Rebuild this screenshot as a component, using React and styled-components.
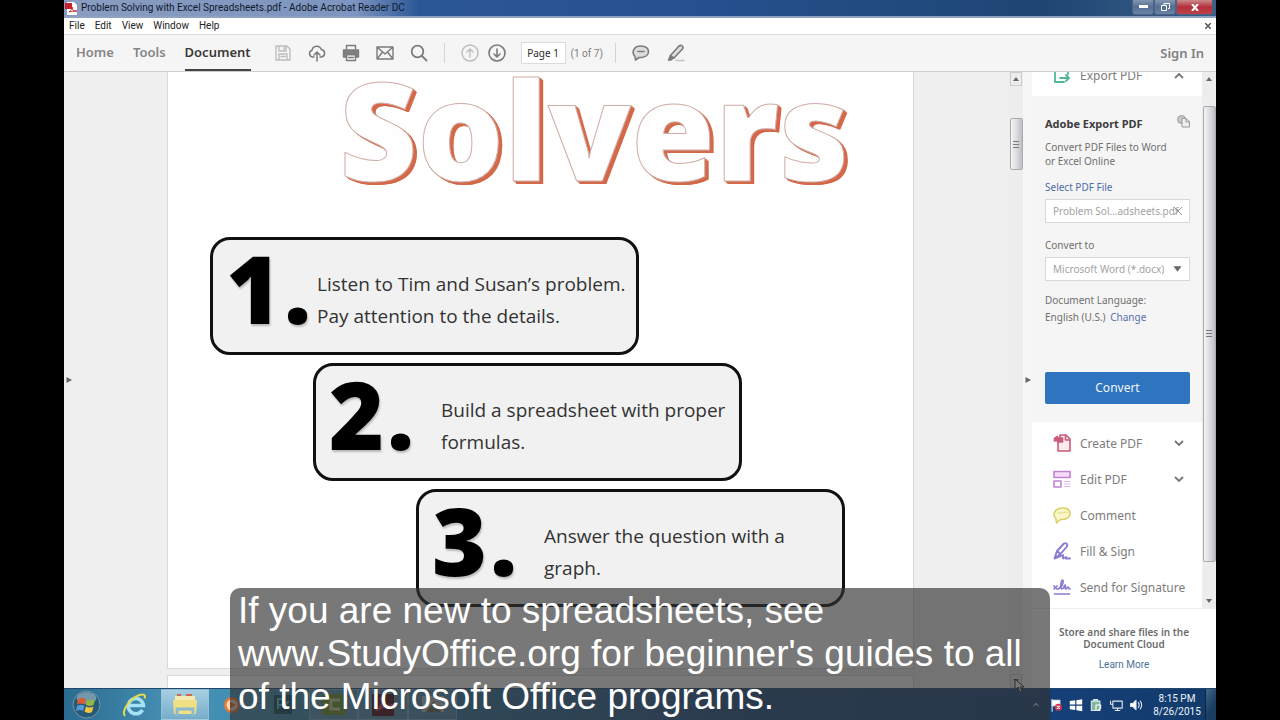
import React from "react";
import styled, { createGlobalStyle, css } from "styled-components";

const GlobalStyle = createGlobalStyle`
  *, *::before, *::after { box-sizing: border-box; }
  body { margin: 0; background: #000; font-family: "Noto Sans", "Open Sans", sans-serif; }
  button, input, select { font: inherit; color: inherit; margin: 0; padding: 0; border: 0; background: none; }
  h1, h2, p, ul, ol { margin: 0; padding: 0; font: inherit; list-style: none; }
  a { color: inherit; text-decoration: none; }
  svg { display: block; flex: none; }
`;

const Screen = styled.div`
  position: relative;
  height: 100vh;
  padding: 0 5%;
  overflow: hidden;
`;
const Desktop = styled.div`
  height: 100%;
  display: flex;
  flex-direction: column;
  background: #f0f0f1;
`;

/* Window frame */
const TitleBar = styled.header`
  flex: none;
  height: 18px;
  display: flex;
  align-items: center;
  padding-left: 1px;
  border-bottom: 2px solid #8fa3c0;
  background: linear-gradient(90deg, #8a9cc0 0, #7d95c0 290px, #2c5797 355px, #26508f 55%, #1e4673 85%, #3a5f88 100%);
`;
const WindowTitle = styled.h1`
  flex: 1;
  margin-left: 4px;
  font-family: Roboto, sans-serif;
  font-size: 10px;
  line-height: 18px;
  color: #10182c;
  white-space: nowrap;
`;
const WindowButtons = styled.div`
  display: flex;
  align-self: flex-start;
  padding-right: 3px;
`;
const WindowButton = styled.button`
  width: ${(p) => (p.$close ? 37 : 22)}px;
  height: 15px;
  display: flex;
  align-items: center;
  justify-content: center;
  border: 1px solid #4b6283;
  border-top: 0;
  border-radius: 0 0 3px 3px;
  background: ${(p) =>
    p.$close
      ? "linear-gradient(#c98a8c, #b5303c 50%, #c04048)"
      : "linear-gradient(#8296b0, #536f94 50%, #6984a6)"};
`;

const MenuBar = styled.nav`
  flex: none;
  height: 16px;
  display: flex;
  align-items: center;
  gap: 10px;
  padding: 0 5px;
  background: #fff;
  font-family: Roboto, sans-serif;
  font-size: 10px;
  color: #222;
`;
const MenuItem = styled.button`
  line-height: 14px;
  &:last-child { margin-left: auto; }
`;

const Toolbar = styled.div`
  flex: none;
  height: 38px;
  display: flex;
  align-items: center;
  padding: 0 12px;
  border-top: 1px solid #dedee1;
  border-bottom: 1px solid #cfcfd1;
  background: #f6f5f6;
  color: #7b7b7b;
`;
const Tabs = styled.div`
  display: flex;
  align-self: stretch;
  gap: 19px;
  margin-right: 23px;
`;
const Tab = styled.button`
  font-size: 13px;
  font-weight: 600;
  color: ${(p) => (p.$active ? "#3a3a3a" : "#858585")};
  border-bottom: 2px solid ${(p) => (p.$active ? "#444" : "transparent")};
`;
const ToolGroup = styled.div`
  display: flex;
  align-items: center;
  gap: ${(p) => p.$gap}px;
`;
const ToolButton = styled.button`
  width: 18px;
  height: 18px;
  opacity: ${(p) => (p.disabled ? 0.45 : 1)};
`;
const Divider = styled.span`
  width: 1px;
  height: 20px;
  margin: 0 16px 0 ${(p) => (p.$tight ? 12 : 16)}px;
  background: #d4d4d6;
`;
const PageInput = styled.input`
  width: 45px;
  height: 22px;
  margin: 0 5px 0 15px;
  border: 1px solid #dcdcde;
  background: #fff;
  font-size: 10px;
  text-align: center;
  color: #2b2b2b;
`;
const PageCount = styled.span`
  font-family: Roboto, sans-serif;
  font-size: 10px;
  white-space: nowrap;
`;
const SignIn = styled.a`
  margin-left: auto;
  font-size: 13px;
  font-weight: 600;
  color: #808080;
`;

/* Document */
const Workspace = styled.main`
  flex: 1;
  min-height: 0;
  display: flex;
  overflow: hidden;
`;
const DocumentView = styled.div`
  flex: 1;
  min-width: 0;
  display: flex;
  align-items: flex-start;
  background: #efeff0;
`;
const SideHandle = styled.button`
  flex: none;
  align-self: stretch;
  width: 9px;
  display: flex;
  align-items: center;
  justify-content: center;
  background: ${(p) => (p.$light ? "#f6f6f6" : "none")};
`;
const Pages = styled.div`
  flex: 1;
  min-width: 0;
  margin: 0 95px 0 94px;
  display: flex;
  flex-direction: column;
  gap: 6px;
`;
const Page = styled.article`
  min-height: ${(p) => (p.$first ? 597 : 40)}px;
  padding-left: 42px;
  overflow: hidden;
  border: 1px solid #d9d9da;
  border-top-width: ${(p) => (p.$first ? 0 : 1)}px;
  background: #fff;
`;
const DocTitle = styled.h2`
  margin: -25px 0 26px 129px;
  font-family: "Open Sans", sans-serif;
  font-weight: 800;
  font-size: 136px;
  line-height: 164px;
  color: #fffefe;
  white-space: nowrap;
  -webkit-text-stroke: 1px #cfaea7;
  text-shadow: 1px 1px 0 #d4694a, 2px 1px 0 #d4694a, 2px 2px 0 #d4694a, 3px 2px 0 #d4694a, 3px 3px 0 #d4694a, 4px 3px 0 #d4694a;
`;
const Steps = styled.ol`
  display: flex;
  flex-direction: column;
  gap: 8px;
`;
const Step = styled.li`
  width: 429px;
  height: 118px;
  margin-left: ${(p) => p.$level * 103}px;
  display: flex;
  border: 3px solid #111;
  border-radius: 20px;
  background: #f1f1f1;
  white-space: nowrap;
`;
const StepNumber = styled.span`
  width: ${(p) => (p.$wide ? 125 : 104)}px;
  padding-left: 13px;
  display: flex;
  gap: 3px;
  font-family: "Open Sans", sans-serif;
  font-weight: 800;
  font-size: 94px;
  line-height: 96px;
  color: #000;
  text-shadow: 1px 2px 2px #8888;
`;
const StepText = styled.p`
  padding-top: 28px;
  font-family: "Open Sans", sans-serif;
  font-size: 19px;
  line-height: 32px;
  color: #333;
`;

const Scrollbar = styled.div`
  flex: none;
  width: 14px;
  display: flex;
  flex-direction: column;
  align-items: center;
  justify-content: space-between;
  background: #ededee;
`;
const ScrollArrow = styled.button`
  width: 12px;
  height: 14px;
  display: flex;
  align-items: center;
  justify-content: center;
  border: ${(p) => (p.$boxed ? "1px solid #ccc" : "0")};
`;
const ScrollThumb = styled.div`
  width: 13px;
  height: ${(p) => p.$height};
  margin-bottom: auto;
  margin-top: ${(p) => p.$offset}px;
  display: flex;
  align-items: center;
  justify-content: center;
  border: 1px solid #aaaab0;
  border-radius: 2px;
  background: linear-gradient(90deg, #f4f4f5, #dcdce0 50%, #bdbdc5);
`;

/* Tool panel */
const ToolsPanel = styled.aside`
  flex: none;
  width: 184px;
  display: flex;
  flex-direction: column;
  background: #fff;
`;
const PanelScroll = styled.div`
  flex: 1;
  min-height: 0;
  display: flex;
  border-bottom: 1px solid #eee;
`;
const PanelBody = styled.div`
  flex: 1;
  min-width: 0;
  overflow: hidden;
`;
const ToolRow = styled.button`
  width: 100%;
  height: 36px;
  margin-top: ${(p) => (p.$scrolled ? -15 : 0)}px;
  display: flex;
  align-items: center;
  padding: 0 18px 0 21px;
  font-size: 12px;
  color: #7c7c7c;
  white-space: nowrap;
  > span { margin-left: 9px; }
  > svg:last-child:not(:first-child) { margin-left: auto; }
`;
const ToolList = styled.div`
  padding-top: 3px;
`;
const ExportForm = styled.form`
  margin-top: 3px;
  padding: 19px 12px 18px 13px;
  display: flex;
  flex-direction: column;
  background: #f5f5f5;
  font-size: 10px;
  line-height: 16px;
  color: #707070;
`;
const FormTitle = styled.h2`
  display: flex;
  justify-content: space-between;
  font-size: 11px;
  font-weight: 700;
  line-height: 18px;
  color: #3c3c3c;
  white-space: nowrap;
`;
const FormText = styled.p`
  margin: 7px 0 11px;
  line-height: 14px;
  white-space: nowrap;
`;
const FieldLabel = styled.label`
  margin-bottom: 4px;
  color: ${(p) => (p.$link ? "#4d6da8" : "#707070")};
`;
const Field = styled.div`
  height: 24px;
  margin-bottom: ${(p) => p.$after}px;
  display: flex;
  align-items: center;
  padding: 0 7px;
  border: 1px solid #d8d8d8;
  background: #fff;
  color: #a2a2a2;
`;
const control = css`
  flex: 1;
  min-width: 0;
  height: 22px;
  appearance: none;
  outline: 0;
`;
const FileInput = styled.input`${control}`;
const FormatSelect = styled.select`${control}`;
const ClearMark = styled.svg`
  margin-left: -8px;
`;
const Language = styled.p`
  margin-bottom: 46px;
  line-height: 17px;
  white-space: nowrap;
  a { margin-left: 2px; color: #5a70ae; }
`;
const ConvertButton = styled.button`
  height: 32px;
  border-radius: 2px;
  background: #2e74be;
  font-size: 12px;
  color: #f1f6fc;
`;
const CloudNote = styled.footer`
  flex: none;
  height: 79px;
  padding-top: 17px;
  text-align: center;
  font-size: 10px;
  line-height: 12px;
  font-weight: 600;
  color: #6c6c6c;
  a { display: block; margin-top: 9px; font-family: Roboto, sans-serif; font-weight: 400; color: #4d7199; }
`;

/* Taskbar */
const Taskbar = styled.footer`
  flex: none;
  height: 32px;
  display: flex;
  align-items: stretch;
  border-top: 1px solid #23466b;
  background: linear-gradient(90deg, #2a6b8f 0, #4790b5 110px, #3f8eb3 200px, #2c6f9c 36%, #1d4a80 60%, #16407a 84%, #123a6b 100%);
`;
const TaskButton = styled.button`
  width: ${(p) => p.$width}px;
  display: flex;
  align-items: center;
  justify-content: center;
  border: 1px solid ${(p) => (p.$open ? "#9cc4dc88" : "transparent")};
  background: ${(p) => (p.$active ? "linear-gradient(#a7cfe2, #77adca)" : p.$open ? "#ffffff22" : "none")};
`;
const Tray = styled.div`
  margin-left: auto;
  display: flex;
  align-items: center;
  gap: 6px;
`;
const TrayButton = styled.button`
  width: 14px;
  height: 14px;
`;
const Clock = styled.time`
  width: 56px;
  text-align: center;
  font-family: Roboto, sans-serif;
  font-size: 10px;
  line-height: 13px;
  color: #eef4fa;
`;
const ShowDesktop = styled.button`
  width: 11px;
  border-left: 1px solid #0c2744;
  background: linear-gradient(120deg, #426889, #1a3d62 60%);
`;

/* Overlays */
const Caption = styled.p`
  position: absolute;
  bottom: 0;
  left: 0;
  right: 0;
  width: 820px;
  max-width: 100%;
  margin: 0 auto;
  padding: 1px 8px 2px;
  border-radius: 10px 10px 0 0;
  background: rgba(50, 50, 50, 0.66);
  font-family: "Liberation Sans", Arial, sans-serif;
  font-size: 37px;
  line-height: 43px;
  color: #fff;
  white-space: pre-line;
`;
const Pointer = styled.svg`
  position: absolute;
  left: 1014px;
  top: 678px;
`;

function Icon({ size = 18, sw = 1.4, color = "currentColor", children }) {
  return (
    <svg width={size} height={size} viewBox="0 0 18 18" fill="none" stroke={color} strokeWidth={sw} strokeLinejoin="round" strokeLinecap="round" aria-hidden="true">
      {children}
    </svg>
  );
}
const Triangle = ({ d, w = 6, h = 6 }) => (
  <svg width={w} height={h} viewBox="0 0 6 6" fill="#666" aria-hidden="true"><path d={d} /></svg>
);
const RIGHT = "M0.5 0L6 3L0.5 6Z";
const UP = "M0 5L3 1L6 5Z";
const DOWN = "M0 1L3 5L6 1Z";
const Grip = () => (
  <svg width="6" height="7" viewBox="0 0 6 7" stroke="#77777d" aria-hidden="true"><path d="M0 .5h6M0 3.500h6M0 6.500h6" /></svg>
);
const Chevron = ({ up }) => (
  <svg width="10" height="7" viewBox="0 0 10 7" fill="none" stroke="#777" strokeWidth="1.8" aria-hidden="true">
    <path d={up ? "M1 6L5 2L9 6" : "M1 1L5 5L9 1"} />
  </svg>
);

const fileTools = [
  ["Save", true, <Icon><path d="M2 2h11l3 3v11H2zM5 2v5h7V2M10 3.500v2M5 16v-6h8v6M7 12.500h4" /></Icon>],
  ["Upload", false, <Icon sw={1.5}><path d="M6 13H4.500A3.500 3.500 0 0 1 4 6.200 4.800 4.800 0 0 1 13.300 5.500 3.800 3.800 0 0 1 13.500 13H12M9 17V8M6 11l3-3 3 3" /></Icon>],
  ["Print", false, <Icon><path d="M4.500 5V1.500h9V5" /><path d="M1.500 6h15v7h-3v-2.500h-9V13h-3z" fill="#808080" /><path d="M4.500 10.500h9v6h-9zM6.500 13.500h5" /></Icon>],
  ["Email", false, <Icon><path d="M1 3h16v12H1zM1 3l8 7 8-7M1 15l5.500-7M17 15l-5.500-7" /></Icon>],
  ["Search", false, <Icon sw={1.8}><circle cx="7.500" cy="7.500" r="5.800" /><path d="M12 12l4.500 4.500" /></Icon>],
];

const steps = [
  ["1", "Listen to Tim and Susan’s problem.", "Pay attention to the details."],
  ["2", "Build a spreadsheet with proper", "formulas."],
  ["3", "Answer the question with a", "graph."],
];

const tools = [
  ["Create PDF", true, <Icon sw={1.6} color="#c95c7a"><path d="M5 8v9h12V5l-4-4H7v3" fill="#fbe9ee" /><path d="M12.500 1v5H17" /><path d="M1.500 7V4.500l3-2v1.500h5V8h-5V6z" fill="#c95c7a" /></Icon>],
  ["Edit PDF", true, <Icon sw={1.6} color="#c483d2"><path d="M1 1.500h16v6H1z" fill="#f5ddf8" /><path d="M1 11h7v6H1z" /><path d="M11.500 11.500H17M11.500 14H17M11.500 16.500H17" strokeWidth="1" opacity=".6" /></Icon>],
  ["Comment", false, <Icon sw={1.5} color="#dccf62"><path d="M3 13C-.5 9 1 4 6 2.500 12 .8 17.500 3 17 8c-.3 4-5 6-9.500 5.500L3.500 17z" fill="#fbf6c8" /><path d="M5 6.500c2 1.500 6-1 9 0" opacity=".5" /></Icon>],
  ["Fill & Sign", false, <Icon sw={1.9} color="#8d79d2"><path d="M1.500 16.500L4 9l7-7.500c2-1 4 .5 3 3L7.500 12l-6 4.500zM4 9l3.500 3M2 16.500l8-3.500v3.500l3-1.500v1.500h4" /></Icon>],
  ["Send for Signature", false, <Icon sw={1.7} color="#8d79d2"><path d="M1.500 16h15M1 8l3 3M4 8l-3 3M5 11c5-2 6-9 4.500-9S7 11 9 11s2-4 3-4-.5 4 .8 4S14 9 15 9s0 2 2 2" /></Icon>],
];

const OpenIcon = ({ children }) => <svg width="28" height="26" viewBox="0 0 28 26" aria-hidden="true">{children}</svg>;
const apps = [
  ["Start", 44, {}, <svg width="29" height="29" viewBox="0 0 29 29" aria-hidden="true">
    <circle cx="14.500" cy="14.500" r="13.500" fill="#275a79" stroke="#7197aa" /><ellipse cx="14.500" cy="8" rx="10" ry="6" fill="#9cbac7" opacity=".65" />
    <path d="M6 9q4-2 7.500 0l-1 5.500q-4-2-7.500 0z" fill="#df5a2c" /><path d="M15 9.500q4 2 8 0l-1.500 5.500q-4 2-7.500 0z" fill="#93b83d" /><path d="M5 16q4-2 7.500 0l-1.500 5q-3-2-7 0z" fill="#559bd8" /><path d="M14 16.500q4 2 7.500 0L20 22q-4 2-7.500-.5z" fill="#f2c53c" /></svg>],
  ["Internet Explorer", 53, {}, <svg width="26" height="26" viewBox="0 0 26 26" fill="none" aria-hidden="true">
    <path d="M20.500 18A7.600 7.600 0 1 1 21.500 13.500H8" stroke="#a5e2f8" strokeWidth="3.500" /><path d="M3 24C-1 19 9 4 20 2.500c3-.3 3.500 1.500 2.500 4" stroke="#e4d94c" strokeWidth="2" /></svg>],
  ["File Explorer", 48, { $active: true, $open: true }, <OpenIcon><path d="M4 4h20v7H4z" fill="#f5eab5" /><path d="M6 3h4M15 3h6" stroke="#c76b4b" strokeWidth="2" /><path d="M2 8h24l-1 14H3z" fill="#f1df83" /><path d="M6 24v-7h16v7" fill="none" stroke="#8cbbd0" strokeWidth="3" /></OpenIcon>],
  ["Media Player", 48, {}, <OpenIcon><circle cx="13" cy="13" r="8" fill="#eb7834" /><circle cx="13" cy="13" r="5.500" fill="#f8d9bb" /><path d="M11 9.500v7l6-3.500z" fill="#e36a25" /></OpenIcon>],
  ["Photo Editor", 52, {}, <OpenIcon><path d="M5 3h18v19H5z" fill="#124a59" /><path d="M9 17V7h3.500a3 3 0 0 1 0 6H9M20 10a3 3 0 1 0 0 6" stroke="#63c3cc" strokeWidth="2" fill="none" /></OpenIcon>],
  ["Recorder", 49, { $open: true }, <OpenIcon><path d="M2 2h24v21H2z" fill="#6a9128" /><path d="M20 8h-9v9h9" fill="none" stroke="#c4d69a" strokeWidth="3" /></OpenIcon>],
  ["Acrobat Reader", 50, { $open: true }, <OpenIcon><path d="M3 2h22v22H3z" fill="#4b0a15" /><path d="M7 19c7-6 8-12 6-13s0 10 8 8-7-1-14 5z" stroke="#c7384b" strokeWidth="2" fill="none" /></OpenIcon>],
  ["Viewer", 49, { $open: true }, <OpenIcon><path d="M3 4h22v16H3z" fill="#b4bcbc" /><path d="M7 20l8-11 7 11z" fill="#5b6a4f" /></OpenIcon>],
];

const trayIcons = [
  ["Show hidden icons", <path d="M6 10l3-3 3 3" stroke="#c7d5e2" />],
  ["Action Center", <><path d="M4 2v15" /><path d="M4 3h10v7H4z" fill="#fff" /><circle cx="12" cy="12" r="4.500" fill="#d23550" stroke="none" /><path d="M10.500 10.500l3 3M13.500 10.500l-3 3" /></>],
  ["Windows Update", <path d="M1 4l7-1v5.500H1zM9.500 2.800L17 1.500v7H9.500zM1 10h7v5.500l-7-1zM9.500 10H17v7l-7.500-1.300z" fill="#fff" stroke="none" />],
  ["Battery", <><path d="M3 4h11v12H3zM6 2h5v2H6z" fill="#83b69a" /><path d="M9 15V9h6v4l-3 3" stroke="#fff" /></>],
  ["Network", <path d="M5 4h12v9H5zM2 4v4h3M8 16h6M11 13v3" />],
  ["Volume", <><path d="M2 7h3l4-4v12l-4-4H2z" fill="#fff" /><path d="M12 6q2 3 0 6M14.500 4q3.500 5 0 10" /></>],
];

export default function App() {
  return (
    <Screen>
      <GlobalStyle />
      <Desktop>
        <TitleBar>
          <svg width="12" height="13" viewBox="0 0 12 13" aria-hidden="true"><path d="M2 0h7l3 3v10H2z" fill="#fff" /><path d="M0 1h7v6H0z" fill="#c8202e" /><path d="M4 10c4-3 4-5 3-5s0 4 4 4-5 0-7 1z" fill="none" stroke="#c8202e" /></svg>
          <WindowTitle>Problem Solving with Excel Spreadsheets.pdf - Adobe Acrobat Reader DC</WindowTitle>
          <WindowButtons>
            <WindowButton aria-label="Minimize"><svg width="9" height="4"><path d="M0 0h9v3H0z" fill="#fff" /></svg></WindowButton>
            <WindowButton aria-label="Restore"><svg width="9" height="8" fill="none" stroke="#fff"><path d="M3 2V.5h5.500v5H7M.5 2.500h5v5h-5z" /></svg></WindowButton>
            <WindowButton $close aria-label="Close"><svg width="8" height="7" stroke="#fff" strokeWidth="2"><path d="M1 0l6 7M7 0L1 7" /></svg></WindowButton>
          </WindowButtons>
        </TitleBar>
        <MenuBar>
          {["File", "Edit", "View", "Window", "Help"].map((m) => <MenuItem key={m}>{m}</MenuItem>)}
          <MenuItem aria-label="Close document"><svg width="6" height="6" stroke="#555" strokeWidth="1.500"><path d="M0 0l6 6M6 0L0 6" /></svg></MenuItem>
        </MenuBar>
        <Toolbar>
          <Tabs>
            <Tab>Home</Tab>
            <Tab>Tools</Tab>
            <Tab $active>Document</Tab>
          </Tabs>
          <ToolGroup $gap={16}>
            {fileTools.map(([name, off, icon]) => <ToolButton key={name} disabled={off} aria-label={name}>{icon}</ToolButton>)}
          </ToolGroup>
          <Divider />
          <ToolGroup $gap={9}>
            <ToolButton disabled aria-label="Previous page"><Icon><circle cx="9" cy="9" r="8" /><path d="M9 13V5M6 8l3-3 3 3" /></Icon></ToolButton>
            <ToolButton aria-label="Next page"><Icon sw={1.6}><circle cx="9" cy="9" r="8" /><path d="M9 5v8M6 10l3 3 3-3" /></Icon></ToolButton>
          </ToolGroup>
          <PageInput aria-label="Page number" defaultValue="Page 1" />
          <PageCount>(1 of 7)</PageCount>
          <Divider $tight />
          <ToolGroup $gap={17}>
            <ToolButton aria-label="Comment"><Icon sw={1.6}><path d="M3 12.500C-.5 9 1 2 9 2c10 0 10 11 0 11.500H7L3.500 16z" fill="#ddd" /><path d="M6 7.500h6" /></Icon></ToolButton>
            <ToolButton aria-label="Highlight"><Icon sw={1.6}><path d="M3 12l9-10c2-1.500 5 0 3.500 3L7 14z" fill="#ddd" /><path d="M1.500 16L3.500 12l3 2-2.500 2z" fill="#808080" /><path d="M9 16.500h8" opacity=".4" /></Icon></ToolButton>
          </ToolGroup>
          <SignIn href="#signin">Sign In</SignIn>
        </Toolbar>
        <Workspace>
          <DocumentView>
            <SideHandle aria-label="Show navigation pane"><Triangle d={RIGHT} /></SideHandle>
            <Pages>
              <Page $first>
                <DocTitle>Solvers</DocTitle>
                <Steps>
                  {steps.map(([n, a, b], i) => (
                    <Step key={n} $level={i}>
                      <StepNumber $wide={i > 0}><span>{n}</span><span>.</span></StepNumber>
                      <StepText>{a}<br />{b}</StepText>
                    </Step>
                  ))}
                </Steps>
              </Page>
              <Page />
            </Pages>
          </DocumentView>
          <Scrollbar>
            <ScrollArrow $boxed aria-label="Scroll up"><Triangle d={UP} /></ScrollArrow>
            <ScrollThumb $height="52px" $offset={32}><Grip /></ScrollThumb>
            <ScrollArrow $boxed aria-label="Scroll down"><Triangle d={DOWN} /></ScrollArrow>
          </Scrollbar>
          <SideHandle $light aria-label="Toggle tools pane"><Triangle d={RIGHT} /></SideHandle>
          <ToolsPanel>
            <PanelScroll>
              <PanelBody>
                <ToolRow $scrolled>
                  <Icon sw={1.8} color="#50b795"><path d="M5 2H2v14h9M12 2h3v6M7 12h9M13 9l3 3-3 3" /></Icon>
                  <span>Export PDF</span><Chevron up />
                </ToolRow>
                <ExportForm onSubmit={(e) => e.preventDefault()}>
                  <FormTitle>Adobe Export PDF
                    <svg width="13" height="13" viewBox="0 0 13 13" fill="#c8c8c8" stroke="#999" aria-hidden="true"><circle cx="4.500" cy="4.500" r="4" /><path d="M5 3.500h4l3.500 3V12H5z" fill="#eee" /><path d="M9 4v3h3" fill="none" /></svg>
                  </FormTitle>
                  <FormText>Convert PDF Files to Word<br />or Excel Online</FormText>
                  <FieldLabel $link htmlFor="file">Select PDF File</FieldLabel>
                  <Field $after={14}>
                    <FileInput id="file" readOnly value="Problem Sol...adsheets.pdf" />
                    <ClearMark width="8" height="8" stroke="#999" aria-hidden="true"><path d="M0 0l8 8M8 0L0 8" /></ClearMark>
                  </Field>
                  <FieldLabel htmlFor="format">Convert to</FieldLabel>
                  <Field $after={11}>
                    <FormatSelect id="format"><option>Microsoft Word (*.docx)</option></FormatSelect>
                    <Triangle d={DOWN} w={9} h={8} />
                  </Field>
                  <Language>Document Language:<br />English (U.S.) <a href="#language">Change</a></Language>
                  <ConvertButton>Convert</ConvertButton>
                </ExportForm>
                <ToolList>
                  {tools.map(([name, more, icon]) => (
                    <ToolRow key={name}>{icon}<span>{name}</span>{more && <Chevron />}</ToolRow>
                  ))}
                </ToolList>
              </PanelBody>
              <Scrollbar>
                <ScrollArrow aria-label="Scroll up"><Triangle d={UP} /></ScrollArrow>
                <ScrollThumb $height="85%" $offset={20}><Grip /></ScrollThumb>
                <ScrollArrow aria-label="Scroll down"><Triangle d={DOWN} /></ScrollArrow>
              </Scrollbar>
            </PanelScroll>
            <CloudNote>
              Store and share files in the<br />Document Cloud
              <a href="#more">Learn More</a>
            </CloudNote>
          </ToolsPanel>
        </Workspace>
        <Taskbar>
          {apps.map(([name, width, state, icon]) => (
            <TaskButton key={name} $width={width} {...state} aria-label={name}>{icon}</TaskButton>
          ))}
          <Tray>
            {trayIcons.map(([name, icon]) => (
              <TrayButton key={name} aria-label={name}><Icon size={14} color="#dfe9f2">{icon}</Icon></TrayButton>
            ))}
            <Clock>8:15 PM<br />8/26/2015</Clock>
          </Tray>
          <ShowDesktop aria-label="Show desktop" />
        </Taskbar>
      </Desktop>
      <Pointer width="10" height="15" viewBox="0 0 10 15" fill="#fff" stroke="#222" aria-hidden="true"><path d="M1 1v11l3-3 2 5 2-1-2-4h4z" /></Pointer>
      <Caption>{"If you are new to spreadsheets, see\nwww.StudyOffice.org for beginner's guides to all\nof the Microsoft Office programs."}</Caption>
    </Screen>
  );
}
